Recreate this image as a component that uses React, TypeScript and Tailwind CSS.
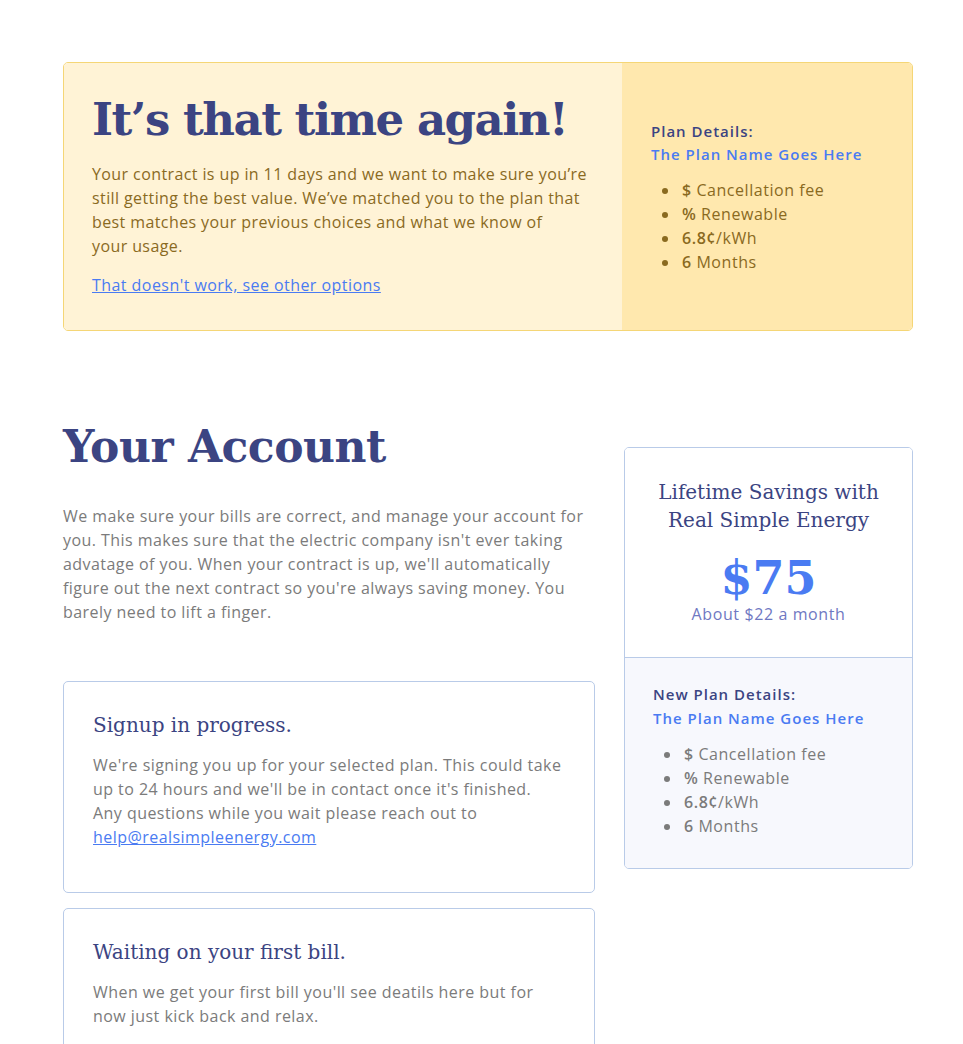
import React from 'react';

const serif = "font-['DejaVu_Serif',serif]";

const PlanList = ({ tone }: { tone: 'brown' | 'gray' }) => {
  const color = tone === 'brown' ? 'text-[#8a6a1f] marker:text-[#8a6a1f]' : 'text-[#7b7b7b] marker:text-[#7b7b7b]';
  return (
    <ul className={`mt-3 list-disc pl-[29px] text-[16px] leading-[24px] tracking-[0.55px] ${color}`}>
      <li className="pl-[2px]"><span className="font-semibold">$</span> Cancellation fee</li>
      <li className="pl-[2px]"><span className="font-semibold">%</span> Renewable</li>
      <li className="pl-[2px]"><span className="font-semibold">6.8¢</span>/kWh</li>
      <li className="pl-[2px]"><span className="font-semibold">6</span> Months</li>
    </ul>
  );
};

const StatusCard = ({ title, children, className = '' }: { title: string; children: React.ReactNode; className?: string }) => (
  <div className={`rounded-[5px] border border-[#b9cbe8] bg-white px-[29px] pt-[28px] ${className}`}>
    <h3 className={`${serif} text-[20px] leading-[30px] tracking-normal text-[#3b4482]`}>{title}</h3>
    <p className="mt-[13px] text-[16px] leading-[24px] tracking-[0.45px] text-[#7b7b7b]">{children}</p>
  </div>
);

export default function App() {
  return (
    <div className="min-h-screen bg-white font-['Open_Sans',sans-serif] tracking-[0.45px]">
      <div className="ml-[63px] w-[850px] pt-[62px]">
        {/* Renewal banner */}
        <div className="flex overflow-hidden rounded-[5px] border border-[#f5d676]">
          <div className="flex-1 bg-[#fff3d6] px-[28px] pt-[29px] pb-[33px]">
            <h1 className={`${serif} text-[45px] leading-[56px] font-bold tracking-[-1.5px] text-[#3b4482]`}>
              It’s that time again!
            </h1>
            <p className="mt-[14px] text-[16px] leading-[24px] tracking-[0.4px] text-[#8a6a1f]">
              Your contract is up in 11 days and we want to make sure you’re still getting the best value. We’ve matched you to the plan that best matches your previous choices and what we know of<br />your usage.
            </p>
            <a href="#" className="mt-[15px] inline-block text-[16px] leading-[24px] text-[#4a7bf2] underline">
              That doesn't work, see other options
            </a>
          </div>
          <div className="flex w-[290px] flex-col justify-center bg-[#ffe8ae] px-[29px]">
            <div className="text-[15px] leading-[23px] font-semibold tracking-[1px] text-[#3b4482]">Plan Details:</div>
            <div className="text-[15px] leading-[23px] font-semibold tracking-[1px] text-[#4a7bf2]">The Plan Name Goes Here</div>
            <PlanList tone="brown" />
          </div>
        </div>

        {/* Account section */}
        <div className="mt-[86px] flex gap-[29px]">
          <div className="w-[532px]">
            <h2 className={`${serif} text-[44px] leading-[60px] font-bold tracking-[-0.5px] text-[#3b4482]`}>Your Account</h2>
            <p className="mt-[27px] text-[16px] leading-[24px] text-[#7b7b7b]">
              We make sure your bills are correct, and manage your account for you. This makes sure that the electric company isn't ever taking advatage of you. When your contract is up, we'll automatically figure out the next contract so you're always saving money. You barely need to lift a finger.
            </p>

            <StatusCard title="Signup in progress." className="mt-[57px] h-[212px]">
              We're signing you up for your selected plan. This could take up to 24 hours and we'll be in contact once it's finished.<br />Any questions while you wait please reach out to{' '}
              <a href="#" className="text-[#4a7bf2] underline">help@realsimpleenergy.com</a>
            </StatusCard>

            <StatusCard title="Waiting on your first bill." className="mt-[15px] h-[160px]">
              When we get your first bill you'll see deatils here but for now just kick back and relax.
            </StatusCard>
          </div>

          <div className="mt-[30px] w-[289px] self-start overflow-hidden rounded-[5px] border border-[#b9cbe8]">
            <div className="border-b border-[#b9cbe8] bg-white px-[20px] pt-[30px] pb-[32px] text-center">
              <h3 className={`${serif} text-[20px] leading-[28px] tracking-normal text-[#3b4482]`}>
                Lifetime Savings with<br />Real Simple Energy
              </h3>
              <div className={`${serif} mt-[19px] text-[46px] leading-[50px] font-bold tracking-normal text-[#4a7bf2]`}>$75</div>
              <div className="text-[16px] leading-[22px] tracking-[0.6px] text-[#6f78c2]">About $22 a month</div>
            </div>
            <div className="bg-[#f7f8fd] px-[28px] pt-[24px] pb-[30px]">
              <div className="text-[15px] leading-[24px] font-semibold tracking-[1px] text-[#3b4482]">New Plan Details:</div>
              <div className="text-[15px] leading-[24px] font-semibold tracking-[1px] text-[#4a7bf2]">The Plan Name Goes Here</div>
              <PlanList tone="gray" />
            </div>
          </div>
        </div>
      </div>
    </div>
  );
}
